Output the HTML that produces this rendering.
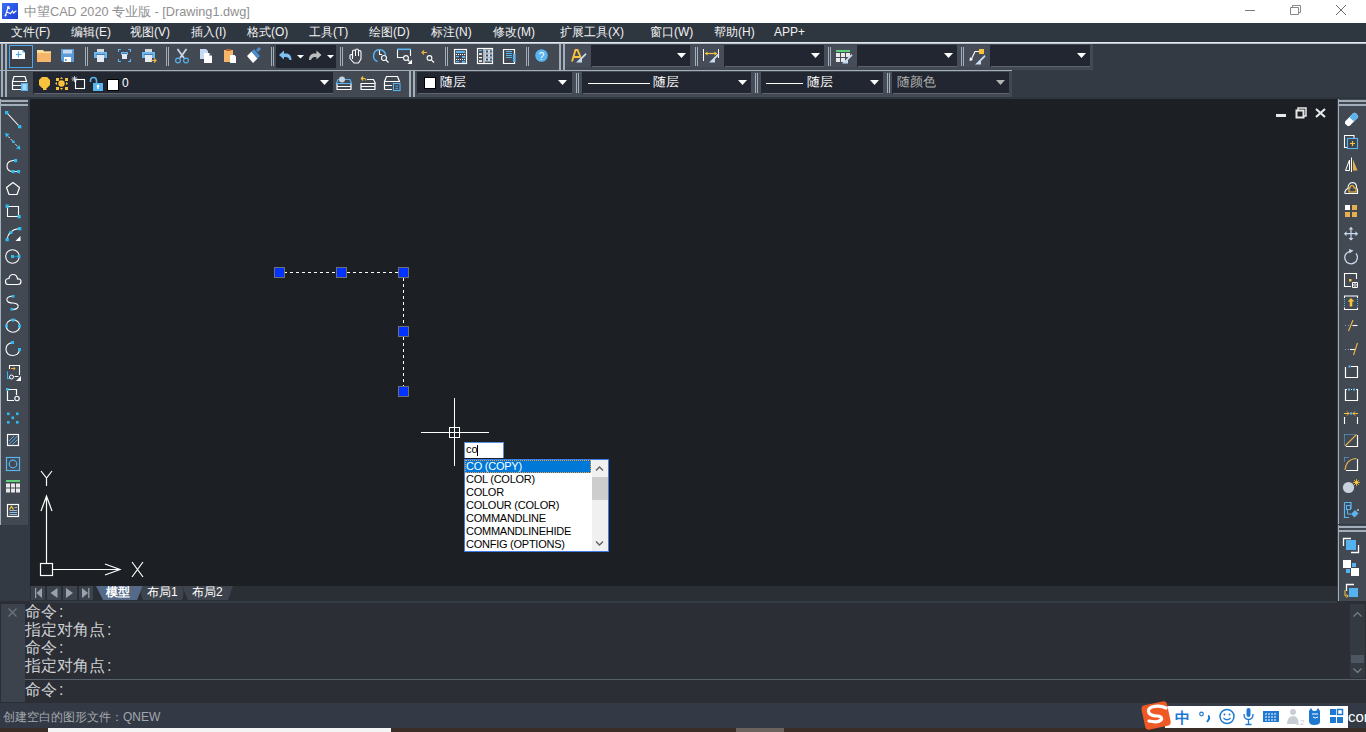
<!DOCTYPE html>
<html><head><meta charset="utf-8">
<style>
*{margin:0;padding:0;box-sizing:border-box}
html,body{width:1366px;height:732px;overflow:hidden;background:#1c1f23;font-family:"Liberation Sans",sans-serif}
.a{position:absolute}
.t{white-space:nowrap;line-height:1}
svg{overflow:visible}
</style></head><body>
<div class="a" style="left:0px;top:0px;width:1366px;height:23px;background:#ffffff;"></div>
<div class="a t" style="left:24px;top:6px;font-size:12.7px;color:#8f8f8f;">中望CAD 2020 专业版 - [Drawing1.dwg]</div>
<div class="a" style="left:0px;top:23px;width:1366px;height:19px;background:#2e3640;"></div>
<div class="a t" style="left:11px;top:26px;font-size:12px;color:#f2f2f2;">文件(F)</div>
<div class="a t" style="left:71px;top:26px;font-size:12px;color:#f2f2f2;">编辑(E)</div>
<div class="a t" style="left:130px;top:26px;font-size:12px;color:#f2f2f2;">视图(V)</div>
<div class="a t" style="left:191px;top:26px;font-size:12px;color:#f2f2f2;">插入(I)</div>
<div class="a t" style="left:247px;top:26px;font-size:12px;color:#f2f2f2;">格式(O)</div>
<div class="a t" style="left:309px;top:26px;font-size:12px;color:#f2f2f2;">工具(T)</div>
<div class="a t" style="left:369px;top:26px;font-size:12px;color:#f2f2f2;">绘图(D)</div>
<div class="a t" style="left:431px;top:26px;font-size:12px;color:#f2f2f2;">标注(N)</div>
<div class="a t" style="left:493px;top:26px;font-size:12px;color:#f2f2f2;">修改(M)</div>
<div class="a t" style="left:560px;top:26px;font-size:12px;color:#f2f2f2;">扩展工具(X)</div>
<div class="a t" style="left:650px;top:26px;font-size:12px;color:#f2f2f2;">窗口(W)</div>
<div class="a t" style="left:714px;top:26px;font-size:12px;color:#f2f2f2;">帮助(H)</div>
<div class="a t" style="left:774px;top:26px;font-size:12px;color:#f2f2f2;">APP+</div>
<div class="a" style="left:0px;top:42px;width:1366px;height:1px;background:#e4e7ea;"></div>
<div class="a" style="left:0px;top:43px;width:1366px;height:1px;background:#b9c2cc;"></div>
<div class="a" style="left:0px;top:44px;width:1366px;height:55px;background:#333a43;"></div>
<div class="a" style="left:0px;top:44px;width:1093px;height:26px;background:#424953;"></div>
<div class="a" style="left:0px;top:70px;width:1012px;height:1px;background:#a3aebb;"></div>
<div class="a" style="left:0px;top:71px;width:1012px;height:26px;background:#424953;"></div>
<div class="a" style="left:0px;top:97px;width:1366px;height:2px;background:#30363e;"></div>
<div class="a" style="left:1px;top:44px;width:2px;height:26px;background:#a3aebb;"></div>
<div class="a" style="left:5px;top:44px;width:2px;height:26px;background:#a3aebb;"></div>
<div class="a" style="left:1px;top:71px;width:2px;height:26px;background:#a3aebb;"></div>
<div class="a" style="left:5px;top:71px;width:2px;height:26px;background:#a3aebb;"></div>
<div class="a" style="left:85px;top:47px;width:1px;height:19px;background:#a3aebb;"></div>
<div class="a" style="left:87px;top:47px;width:1px;height:19px;background:#a3aebb;"></div>
<div class="a" style="left:166px;top:47px;width:1px;height:19px;background:#a3aebb;"></div>
<div class="a" style="left:168px;top:47px;width:1px;height:19px;background:#a3aebb;"></div>
<div class="a" style="left:271px;top:47px;width:1px;height:19px;background:#a3aebb;"></div>
<div class="a" style="left:273px;top:47px;width:1px;height:19px;background:#a3aebb;"></div>
<div class="a" style="left:340px;top:47px;width:1px;height:19px;background:#a3aebb;"></div>
<div class="a" style="left:342px;top:47px;width:1px;height:19px;background:#a3aebb;"></div>
<div class="a" style="left:445px;top:47px;width:1px;height:19px;background:#a3aebb;"></div>
<div class="a" style="left:447px;top:47px;width:1px;height:19px;background:#a3aebb;"></div>
<div class="a" style="left:526px;top:47px;width:1px;height:19px;background:#a3aebb;"></div>
<div class="a" style="left:528px;top:47px;width:1px;height:19px;background:#a3aebb;"></div>
<div class="a" style="left:559px;top:44px;width:2px;height:26px;background:#a3aebb;"></div>
<div class="a" style="left:563px;top:44px;width:2px;height:26px;background:#a3aebb;"></div>
<div class="a" style="left:276px;top:45px;width:60px;height:23px;background:#212631;"></div>
<div class="a" style="left:565px;top:45px;width:26px;height:22px;background:#464d58;"></div>
<div class="a" style="left:591px;top:45px;width:99px;height:22px;background:#212631;"></div>
<div class="a" style="left:592px;top:66px;width:98px;height:1px;background:#5d646e;"></div>
<svg class="a" style="left:677px;top:53px" width="9" height="5"><path d="M0 0H9L4.5 5Z" fill="#ffffff"/></svg>
<div class="a" style="left:695px;top:47px;width:1px;height:19px;background:#a3aebb;"></div>
<div class="a" style="left:697px;top:47px;width:1px;height:19px;background:#a3aebb;"></div>
<div class="a" style="left:691px;top:45px;width:33px;height:22px;background:#464d58;"></div>
<div class="a" style="left:695px;top:47px;width:1px;height:19px;background:#a3aebb;"></div>
<div class="a" style="left:697px;top:47px;width:1px;height:19px;background:#a3aebb;"></div>
<div class="a" style="left:724px;top:45px;width:100px;height:22px;background:#212631;"></div>
<div class="a" style="left:725px;top:66px;width:99px;height:1px;background:#5d646e;"></div>
<svg class="a" style="left:811px;top:53px" width="9" height="5"><path d="M0 0H9L4.5 5Z" fill="#ffffff"/></svg>
<div class="a" style="left:824px;top:45px;width:33px;height:22px;background:#464d58;"></div>
<div class="a" style="left:828px;top:47px;width:1px;height:19px;background:#a3aebb;"></div>
<div class="a" style="left:830px;top:47px;width:1px;height:19px;background:#a3aebb;"></div>
<div class="a" style="left:857px;top:45px;width:100px;height:22px;background:#212631;"></div>
<div class="a" style="left:858px;top:66px;width:99px;height:1px;background:#5d646e;"></div>
<svg class="a" style="left:944px;top:53px" width="9" height="5"><path d="M0 0H9L4.5 5Z" fill="#ffffff"/></svg>
<div class="a" style="left:957px;top:45px;width:33px;height:22px;background:#464d58;"></div>
<div class="a" style="left:961px;top:47px;width:1px;height:19px;background:#a3aebb;"></div>
<div class="a" style="left:963px;top:47px;width:1px;height:19px;background:#a3aebb;"></div>
<div class="a" style="left:990px;top:45px;width:100px;height:22px;background:#212631;"></div>
<div class="a" style="left:991px;top:66px;width:99px;height:1px;background:#5d646e;"></div>
<svg class="a" style="left:1077px;top:53px" width="9" height="5"><path d="M0 0H9L4.5 5Z" fill="#ffffff"/></svg>
<div class="a" style="left:33px;top:72px;width:300px;height:22px;background:#212631;"></div>
<div class="a" style="left:34px;top:93px;width:299px;height:1px;background:#5d646e;"></div>
<svg class="a" style="left:320px;top:80px" width="9" height="5"><path d="M0 0H9L4.5 5Z" fill="#ffffff"/></svg>
<div class="a" style="left:409px;top:71px;width:2px;height:26px;background:#a3aebb;"></div>
<div class="a" style="left:413px;top:71px;width:2px;height:26px;background:#a3aebb;"></div>
<div class="a" style="left:417px;top:72px;width:155px;height:22px;background:#212631;"></div>
<div class="a" style="left:418px;top:93px;width:154px;height:1px;background:#5d646e;"></div>
<svg class="a" style="left:558px;top:80px" width="9" height="5"><path d="M0 0H9L4.5 5Z" fill="#ffffff"/></svg>
<div class="a" style="left:572px;top:72px;width:10px;height:22px;background:#464d58;"></div>
<div class="a" style="left:576px;top:73px;width:1px;height:20px;background:#a3aebb;"></div>
<div class="a" style="left:578px;top:73px;width:1px;height:20px;background:#a3aebb;"></div>
<div class="a" style="left:582px;top:72px;width:169px;height:22px;background:#212631;"></div>
<div class="a" style="left:583px;top:93px;width:168px;height:1px;background:#5d646e;"></div>
<svg class="a" style="left:738px;top:80px" width="9" height="5"><path d="M0 0H9L4.5 5Z" fill="#ffffff"/></svg>
<div class="a" style="left:751px;top:72px;width:10px;height:22px;background:#464d58;"></div>
<div class="a" style="left:755px;top:73px;width:1px;height:20px;background:#a3aebb;"></div>
<div class="a" style="left:757px;top:73px;width:1px;height:20px;background:#a3aebb;"></div>
<div class="a" style="left:761px;top:72px;width:122px;height:22px;background:#212631;"></div>
<div class="a" style="left:762px;top:93px;width:121px;height:1px;background:#5d646e;"></div>
<svg class="a" style="left:870px;top:80px" width="9" height="5"><path d="M0 0H9L4.5 5Z" fill="#ffffff"/></svg>
<div class="a" style="left:883px;top:72px;width:9px;height:22px;background:#464d58;"></div>
<div class="a" style="left:887px;top:73px;width:1px;height:20px;background:#a3aebb;"></div>
<div class="a" style="left:889px;top:73px;width:1px;height:20px;background:#a3aebb;"></div>
<div class="a" style="left:892px;top:72px;width:117px;height:22px;background:#212631;"></div>
<div class="a" style="left:893px;top:93px;width:116px;height:1px;background:#5d646e;"></div>
<svg class="a" style="left:996px;top:80px" width="9" height="5"><path d="M0 0H9L4.5 5Z" fill="#b4b4b4"/></svg>
<div class="a t" style="left:122px;top:77px;font-size:12px;color:#ffffff;">0</div>
<div class="a t" style="left:440px;top:75px;font-size:13px;color:#ffffff;">随层</div>
<div class="a" style="left:588px;top:83px;width:62px;height:1px;background:#ffffff;"></div>
<div class="a t" style="left:653px;top:75px;font-size:13px;color:#ffffff;">随层</div>
<div class="a" style="left:766px;top:83px;width:37px;height:1px;background:#ffffff;"></div>
<div class="a t" style="left:807px;top:75px;font-size:13px;color:#ffffff;">随层</div>
<div class="a t" style="left:897px;top:75px;font-size:13px;color:#b0b0b0;">随颜色</div>
<div class="a" style="left:0px;top:99px;width:30px;height:502px;background:#333a43;"></div>
<div class="a" style="left:0px;top:99px;width:28px;height:426px;background:#424953;"></div>
<div class="a" style="left:0px;top:99px;width:1px;height:426px;background:#a3aebb;"></div>
<div class="a" style="left:1px;top:100px;width:27px;height:2px;background:#a3aebb;"></div>
<div class="a" style="left:1px;top:104px;width:27px;height:2px;background:#a3aebb;"></div>
<div class="a" style="left:1337px;top:99px;width:29px;height:502px;background:#333a43;"></div>
<div class="a" style="left:1338px;top:99px;width:28px;height:425px;background:#424953;"></div>
<div class="a" style="left:1338px;top:99px;width:1px;height:425px;background:#a3aebb;"></div>
<div class="a" style="left:1339px;top:100px;width:27px;height:2px;background:#a3aebb;"></div>
<div class="a" style="left:1339px;top:104px;width:27px;height:2px;background:#a3aebb;"></div>
<div class="a" style="left:1338px;top:525px;width:28px;height:76px;background:#424953;"></div>
<div class="a" style="left:1338px;top:525px;width:1px;height:76px;background:#a3aebb;"></div>
<div class="a" style="left:1339px;top:526px;width:27px;height:2px;background:#a3aebb;"></div>
<div class="a" style="left:1339px;top:530px;width:27px;height:2px;background:#a3aebb;"></div>
<div class="a" style="left:30px;top:99px;width:1306px;height:487px;background:#1c1f23;"></div>
<div class="a" style="left:30px;top:586px;width:1307px;height:16px;background:#2a2e35;"></div>
<div class="a" style="left:31px;top:586px;width:14px;height:14px;background:#3d434c;"></div>
<div class="a" style="left:47px;top:586px;width:14px;height:14px;background:#3d434c;"></div>
<div class="a" style="left:63px;top:586px;width:14px;height:14px;background:#3d434c;"></div>
<div class="a" style="left:79px;top:586px;width:14px;height:14px;background:#3d434c;"></div>
<div class="a" style="left:0px;top:601px;width:1366px;height:102px;background:#2b2e34;"></div>
<div class="a" style="left:30px;top:601px;width:1307px;height:2px;background:#343b45;"></div>
<div class="a" style="left:1px;top:604px;width:24px;height:98px;background:#3d434d;"></div>
<div class="a" style="left:25px;top:679px;width:1341px;height:1px;background:#56606a;"></div>
<div class="a" style="left:1350px;top:604px;width:15px;height:74px;background:#343a42;"></div>
<div class="a" style="left:1351px;top:655px;width:13px;height:8px;background:#4d5560;"></div>
<div class="a t" style="left:25px;top:603px;font-size:16px;color:#cdd1d5;line-height:18px">命令<span style="margin-left:2px">:</span></div>
<div class="a t" style="left:25px;top:621px;font-size:16px;color:#cdd1d5;line-height:18px">指定对角点<span style="margin-left:2px">:</span></div>
<div class="a t" style="left:25px;top:639px;font-size:16px;color:#cdd1d5;line-height:18px">命令<span style="margin-left:2px">:</span></div>
<div class="a t" style="left:25px;top:657px;font-size:16px;color:#cdd1d5;line-height:18px">指定对角点<span style="margin-left:2px">:</span></div>
<div class="a t" style="left:25px;top:681px;font-size:16px;color:#cdd1d5;line-height:18px">命令<span style="margin-left:2px">:</span></div>
<div class="a" style="left:0px;top:703px;width:1366px;height:25px;background:#333a45;"></div>
<div class="a t" style="left:3px;top:711px;font-size:12px;color:#a3a7ad;">创建空白的图形文件：QNEW</div>
<div class="a" style="left:0px;top:728px;width:1366px;height:4px;background:#3a2c27;"></div>
<div class="a" style="left:48px;top:728px;width:343px;height:4px;background:#f4f4f4;"></div>
<div class="a" style="left:736px;top:728px;width:48px;height:4px;background:#6b625e;"></div>
<div class="a" style="left:1165px;top:706px;width:183px;height:22px;background:#ffffff;"></div>
<div class="a t" style="left:1348px;top:709px;font-size:15px;color:#ffffff;">com</div>
<svg class="a" style="left:0;top:0" width="1366" height="732"><rect x="9.5" y="45.5" width="23" height="22" fill="#3b4049" stroke="#4aa8f0"/><path d="M12 50H22.5L25 52.5V59H12Z" fill="#ffffff"/><path d="M22.5 50V52.5H25Z" fill="#5ab4f0"/><path d="M16 54.5H21.5M18.5 51.5V57.5" stroke="#4aa8f0" stroke-width="1.2"/><path d="M37 50H43L44 51.5H51V62H37Z" fill="#f5b56b"/><path d="M37 50H43L44 51.5H51V53H37Z" fill="#fbe09a"/><path d="M61 49H74V62H63L61 60Z" fill="#5b9bd8"/><rect x="63" y="50" width="9" height="3.5" fill="#c8daf0"/><rect x="64" y="57" width="7" height="5" fill="#fff"/><rect x="65" y="59" width="1.6" height="2" fill="#5b9bd8"/><rect x="97" y="49" width="7" height="3" fill="#d5dbe3"/><rect x="94" y="52" width="13" height="6" fill="#6db6ee"/><rect x="96" y="54" width="9" height="1" fill="#3f79b0"/><rect x="97" y="55" width="7" height="7" fill="#e4e9f2"/><path d="M118.5 52V49.5H121M128 49.5H130.5V52M118.5 59V61.5H121M128 61.5H130.5V59" stroke="#5ab4f0" stroke-width="1.1" fill="none"/><rect x="121" y="52" width="7" height="3" fill="#6db6ee"/><rect x="122" y="53" width="5" height="1" fill="#3f79b0"/><rect x="122" y="54" width="5" height="5" fill="#e4e9f2"/><rect x="145" y="49" width="7" height="3" fill="#d5dbe3"/><rect x="142" y="52" width="13" height="6" fill="#6db6ee"/><rect x="144" y="54" width="9" height="1" fill="#3f79b0"/><rect x="145" y="55" width="7" height="7" fill="#e4e9f2"/><path d="M151 60.5H156M154 58.5L156 60.5L154 62.5" stroke="#f5b342" stroke-width="1.2" fill="none"/><path d="M177.5 49L184 58M186.5 49L180 58" stroke="#c8d8ea" stroke-width="1.8"/><circle cx="178" cy="60.5" r="2.4" stroke="#5ab4f0" stroke-width="1.1" fill="none"/><circle cx="186" cy="60.5" r="2.4" stroke="#5ab4f0" stroke-width="1.1" fill="none"/><path d="M200 49H206L208 51V59H200Z" fill="#c5daf2"/><path d="M204 53H209.5L212 55.5V63H204Z" fill="#fff"/><path d="M209.5 53V55.5H212Z" fill="#3c434d"/><rect x="224" y="50" width="9" height="12" fill="#f5b56b"/><rect x="226" y="49" width="5" height="2" fill="#b5642e"/><path d="M230 55H234.5L236 56.5V63H230Z" fill="#fff"/><path d="M247 56L253 63L257.5 58.5L251.5 51.5Z" fill="#fff"/><path d="M251.5 51.5L257.5 58.5L260 56L254 49Z" fill="#4a8fd0"/><path d="M256 50L259 47L261 49L258 52Z" fill="#4a8fd0"/><path d="M279 55L284 50.5V53.5H286C289.5 53.5 291.5 56 291.5 60H289.5C289 58 287.5 57 286 57H284V59.5Z" fill="#7ebff2"/><path d="M297 55H304L300.5 58.5Z" fill="#fff"/><path d="M321.5 55L316.5 50.5V53.5H314.5C311 53.5 309 56 309 60H311C311.5 58 313 57 314.5 57H316.5V59.5Z" fill="#bdbdbd"/><path d="M327 55H334L330.5 58.5Z" fill="#fff"/><path d="M352.5 59V53.5M352.5 53.5V51.5Q352.5 50 354 50Q355.5 50 355.5 51.5V50.5Q355.5 49 357 49Q358.5 49 358.5 50.5V51.5Q358.5 50.5 359.8 50.5Q361 50.5 361 52V59L358.5 63H354L350 58.5V55.5Q350 54.5 351.2 54.5Q352.5 54.5 352.5 55.5" stroke="#fff" stroke-width="1.1" fill="none" stroke-linejoin="round"/><path d="M355.5 51.5V56M358.5 51V56" stroke="#fff" stroke-width="1"/><path d="M377.5 61.5A6 6 0 1 1 385.5 55" stroke="#5ab4f0" stroke-width="1.5" fill="none"/><path d="M379.5 50.5V54.5H382" stroke="#fff" stroke-width="1.1" fill="none"/><circle cx="384" cy="58" r="2.5" stroke="#fff" stroke-width="1.1" fill="none"/><path d="M385.8 59.8L388.5 62.5" stroke="#fff" stroke-width="1.2"/><path d="M403 57.5H397.5V49.5H410.5V56" stroke="#fff" stroke-width="1.1" fill="none"/><rect x="397" y="48.5" width="14" height="1.6" fill="#5ab4f0"/><circle cx="406" cy="58" r="2.4" stroke="#fff" stroke-width="1.1" fill="none"/><path d="M407.7 59.7L409.5 61.5" stroke="#fff" stroke-width="1.1"/><path d="M407.5 64H412V59.5Z" fill="#fff"/><path d="M427 52.5H422M424 50.5L422 52.5L424 54.5" stroke="#f5b342" stroke-width="1.1" fill="none"/><circle cx="429.5" cy="58" r="2.4" stroke="#fff" stroke-width="1.1" fill="none"/><path d="M431.3 59.8L434 62.5" stroke="#fff" stroke-width="1.2"/><rect x="454.5" y="49.5" width="12" height="14" stroke="#fff" stroke-width="1.2" fill="none"/><rect x="456" y="51" width="9" height="2" fill="#5ab4f0"/><rect x="456.0" y="54.0" width="1" height="1" fill="#fff"/><rect x="458.0" y="54.0" width="1" height="1" fill="#fff"/><rect x="460.0" y="54.0" width="1" height="1" fill="#fff"/><rect x="462.0" y="54.0" width="1" height="1" fill="#fff"/><rect x="464.0" y="54.0" width="1" height="1" fill="#fff"/><rect x="456.0" y="59.0" width="1" height="1" fill="#fff"/><rect x="458.0" y="59.0" width="1" height="1" fill="#fff"/><rect x="460.0" y="59.0" width="1" height="1" fill="#fff"/><rect x="462.0" y="59.0" width="1" height="1" fill="#fff"/><rect x="464.0" y="59.0" width="1" height="1" fill="#fff"/><rect x="456" y="56" width="3" height="1.2" fill="#5ab4f0"/><rect x="462" y="56" width="3" height="2" fill="#5ab4f0"/><rect x="456" y="61" width="3" height="1.2" fill="#5ab4f0"/><rect x="462" y="61" width="3" height="2" fill="#5ab4f0"/><rect x="477.5" y="48.5" width="15" height="15" stroke="#fff" stroke-width="1.2" fill="none"/><path d="M484 48.5V63.5" stroke="#fff" stroke-width="1.2"/><rect x="479" y="50" width="3" height="1.2" fill="#5ab4f0"/><rect x="479" y="53" width="3" height="2" fill="#fff" opacity=".8"/><rect x="479" y="57" width="3" height="1.2" fill="#fff"/><rect x="479" y="60" width="3" height="2" fill="#fff" opacity=".8"/><rect x="485.5" y="50.0" width="3" height="3" stroke="#c8d8ea" stroke-width="1" fill="none"/><rect x="489.5" y="50.0" width="3" height="3" stroke="#c8d8ea" stroke-width="1" fill="none"/><rect x="485.5" y="54.0" width="3" height="3" stroke="#c8d8ea" stroke-width="1" fill="none"/><rect x="489.5" y="54.0" width="3" height="3" stroke="#c8d8ea" stroke-width="1" fill="none"/><rect x="485.5" y="58.0" width="3" height="3" stroke="#c8d8ea" stroke-width="1" fill="none"/><rect x="489.5" y="58.0" width="3" height="3" stroke="#c8d8ea" stroke-width="1" fill="none"/><path d="M503.5 49.5H514.5V63.5H503.5Z" stroke="#fff" stroke-width="1.2" fill="none"/><path d="M506 51.5H512M506 53.5H512M506 55.5H512M506 57.5H512" stroke="#5ab4f0" stroke-width="1"/><rect x="513" y="54" width="2.5" height="8" fill="#5ab4f0"/><circle cx="541.5" cy="55.5" r="6.3" fill="#5ab4f0"/><text x="541.5" y="59.5" font-size="10" font-family="Liberation Sans" fill="#fff" text-anchor="middle">?</text><path d="M572 61.5L575.5 50H577.5L580.5 57M573.5 57H581" stroke="#f9c23c" stroke-width="1.9" fill="none"/><path d="M576 62.5L585.5 53L586.5 54.5L582 59V62.5Z" fill="#c9dbef"/><path d="M703.5 49V61M718.5 49V58" stroke="#fff" stroke-width="1"/><path d="M705 53.5H717" stroke="#f9c23c" stroke-width="1.2"/><path d="M705 53.5L707.5 51.5V55.5Z M717 53.5L714.5 51.5V55.5Z" fill="#f9c23c"/><path d="M709 62.5L718.5 53L719.5 54.5L715 59V62.5Z" fill="#c9dbef"/><rect x="836" y="50" width="14" height="2" fill="#5fd07a"/><rect x="836" y="53" width="4" height="4" fill="#e8e8e8"/><rect x="841" y="53" width="4" height="4" fill="#e8e8e8"/><rect x="846" y="53" width="4" height="4" fill="#e8e8e8"/><rect x="836" y="58" width="4" height="4" fill="#e8e8e8"/><rect x="841" y="58" width="4" height="4" fill="#e8e8e8"/><path d="M842 63.5L851.5 54L852.5 55.5L848 60V63.5Z" fill="#c9dbef"/><rect x="979" y="49" width="5" height="5" fill="#f9c23c"/><path d="M979 51.5H975L971 60" stroke="#fff" stroke-width="1.1" fill="none"/><path d="M969.5 61L970 57L973 60Z" fill="#fff"/><path d="M975 64.5L984.5 55L985.5 56.5L981 61V64.5Z" fill="#c9dbef"/><path d="M12.5 81.5L14 76.5H25L26.5 81.5H12.5M12.5 81.5V85.5H21M12.5 85.5V89.5H21" stroke="#fff" stroke-width="1.2" fill="none"/><rect x="21" y="83" width="7" height="8" fill="#5ab4f0"/><path d="M22.5 85H26.5M22.5 87H26.5M22.5 89H26.5" stroke="#fff" stroke-width=".9"/><path d="M42 77H47L50 80V85L47 88H42L39 85V80Z" fill="#f9c23c"/><rect x="43" y="88" width="3.5" height="2" fill="#f9c23c"/><circle cx="61.5" cy="83.5" r="3.2" fill="#f9c23c"/><rect x="56" y="78" width="3" height="3" fill="#f9c23c"/><rect x="65" y="78" width="3" height="3" fill="#f9c23c"/><rect x="56" y="87" width="3" height="3" fill="#f9c23c"/><rect x="65" y="87" width="3" height="3" fill="#f9c23c"/><path d="M61.5 77L60 79H63Z M61.5 90L60 88H63Z M55 83.5L57 82V85Z M68 83.5L66 82V85Z" fill="#f9c23c"/><rect x="75.5" y="79.5" width="9" height="9" stroke="#fff" stroke-width="1.1" fill="none"/><path d="M74.5 76V82M71.5 79H77.5M72.3 76.8L76.7 81.2M76.7 76.8L72.3 81.2" stroke="#d8d8d8" stroke-width=".9"/><path d="M90.5 82V80.5Q90.5 77.5 93.5 77.5Q96.5 77.5 96.5 80.5V83" stroke="#5ab4f0" stroke-width="1.6" fill="none"/><rect x="93" y="83" width="10" height="8" fill="#5ab4f0"/><circle cx="98" cy="86" r="1.3" fill="#fff"/><rect x="97.3" y="86" width="1.4" height="3" fill="#fff"/><rect x="107.5" y="79.5" width="11" height="11" fill="#fff" stroke="#000" stroke-width="1"/><path d="M336.5 86.5H351.5M336.5 89.5H351.5M337 83.5V89.5M351 83.5V89.5" stroke="#fff" stroke-width="1.2" fill="none"/><path d="M336.5 83.5L338 79.5H350L351.5 83.5Z" stroke="#5ab4f0" stroke-width="1.2" fill="none"/><circle cx="342" cy="79.5" r="3" fill="#c8d2de"/><path d="M367 79.5H373.5L375.5 83.5M360.5 83.5H375.5M360.5 86.5H375.5M360.5 89.5H375.5M361 83.5V89.5M375 83.5V89.5" stroke="#fff" stroke-width="1.2" fill="none"/><path d="M361.5 78.5H364.5Q366 78.5 366 80.5M363.2 76.5L361.3 78.5L363.2 80.5" stroke="#f9c23c" stroke-width="1.1" fill="none"/><path d="M384.5 81.5L386.5 76.5H397.5L399.5 81.5H384.5M384.5 81.5V89.5M384.5 85.5H392M384.5 89.5H392" stroke="#fff" stroke-width="1.2" fill="none"/><rect x="393.5" y="83.5" width="6.5" height="7" stroke="#5ab4f0" stroke-width="1.1" fill="#3c4450"/><path d="M395.5 86H398M395.5 88.3H398" stroke="#5ab4f0" stroke-width="1"/><rect x="424.5" y="77.5" width="11" height="11" fill="#fff" stroke="#000" stroke-width="1"/><path d="M6.5 112.5L19.5 126.5" stroke="#fff" stroke-width="1.1"/><rect x="5" y="111" width="3.3" height="3.3" fill="#2fbaf2"/><rect x="18" y="125" width="3.3" height="3.3" fill="#2fbaf2"/><path d="M6 134L19.5 148.5" stroke="#fff" stroke-width="1" stroke-dasharray="2 1.5"/><path d="M5 133L9.5 134L6 137.5Z M20.5 149.5L16 148.5L19.5 145Z" fill="#2fbaf2"/><rect x="12" y="140.5" width="2.5" height="2.5" fill="#2fbaf2"/><path d="M15 160.5H13.5Q7 161 7 166Q7 171.5 13 171.5H18.5" stroke="#fff" stroke-width="1.1" fill="none"/><rect x="14" y="159" width="3.2" height="3.2" fill="#2fbaf2"/><rect x="11.5" y="170" width="3.2" height="3.2" fill="#2fbaf2"/><rect x="17" y="170" width="3.2" height="3.2" fill="#2fbaf2"/><path d="M13 182.5L19.5 187.5L17 194.5H9L6.5 187.5Z" stroke="#fff" stroke-width="1.2" fill="none" stroke-linejoin="round"/><path d="M7.5 206.5H18.5V216.5H7.5Z" stroke="#fff" stroke-width="1.1" fill="none"/><rect x="5.5" y="204.5" width="3.3" height="3.3" fill="#2fbaf2"/><rect x="17.5" y="215" width="3.3" height="3.3" fill="#2fbaf2"/><path d="M7 240Q8 230 19 228.5" stroke="#fff" stroke-width="1.1" fill="none"/><rect x="5.5" y="238" width="3.3" height="3.3" fill="#2fbaf2"/><rect x="9.5" y="231" width="3" height="3" fill="#2fbaf2"/><rect x="18" y="227" width="3.3" height="3.3" fill="#2fbaf2"/><path d="M15.5 241H20.5V236Z" fill="#fff"/><circle cx="12.5" cy="256.5" r="6.8" stroke="#fff" stroke-width="1.1" fill="none"/><path d="M12.5 256.5H18" stroke="#2fbaf2" stroke-width="1" stroke-dasharray="1 1"/><rect x="11" y="255" width="3" height="3" fill="#2fbaf2"/><rect x="17.5" y="255" width="3" height="3" fill="#2fbaf2"/><path d="M8 284.5H18Q21 284.5 21 281.5Q21 278.5 17.5 279Q17 274.5 13 274.5Q9.5 274.5 9 278.5Q5.5 278.5 5.5 281.5Q5.5 284.5 8 284.5Z" stroke="#fff" stroke-width="1.2" fill="none"/><path d="M13 296Q6 296.5 7 300.5Q8 303 13 303Q19 303.5 18 307Q17 309.5 12 309.5" stroke="#fff" stroke-width="1.1" fill="none"/><rect x="11.5" y="295" width="3" height="2.6" fill="#2fbaf2"/><rect x="10.5" y="308" width="3" height="2.6" fill="#2fbaf2"/><ellipse cx="13" cy="326" rx="6.8" ry="6.3" stroke="#fff" stroke-width="1.1" fill="none"/><rect x="11.5" y="318.5" width="3" height="3" fill="#2fbaf2"/><rect x="5" y="324.5" width="3" height="3" fill="#2fbaf2"/><rect x="18" y="324.5" width="3" height="3" fill="#2fbaf2"/><path d="M12 342.5Q6 344 6 349Q6 355 12.5 355.5Q18.5 355.5 19.5 350" stroke="#fff" stroke-width="1.1" fill="none"/><rect x="11" y="341" width="3" height="3" fill="#2fbaf2"/><rect x="18" y="348" width="3" height="3" fill="#2fbaf2"/><path d="M9.5 369V365.5H19.5V375" stroke="#fff" stroke-width="1.1" fill="none"/><path d="M7.5 371.5V378.5H10" stroke="#2fbaf2" stroke-width="1.1" fill="none"/><circle cx="11.5" cy="377" r="2" stroke="#fff" stroke-width="1" fill="none"/><path d="M14.5 376.5H18.5" stroke="#fff" stroke-width="1"/><path d="M16 381H21V376Z" fill="#fff"/><path d="M11 368.5H15M13.5 367L15.2 368.5L13.5 370" stroke="#f5b342" stroke-width="1" fill="none"/><path d="M7.5 390.5V400.5H14M7.5 389.5H16.5V395" stroke="#fff" stroke-width="1.2" fill="none"/><circle cx="17" cy="398.5" r="2.2" stroke="#fff" stroke-width="1.1" fill="none"/><rect x="6" y="388" width="2.6" height="2.6" fill="#2fbaf2"/><rect x="7" y="412.5" width="2.6" height="2.6" fill="#2fbaf2"/><rect x="16" y="412.5" width="2.6" height="2.6" fill="#2fbaf2"/><rect x="11.5" y="416.5" width="2.6" height="2.6" fill="#2fbaf2"/><rect x="7" y="421" width="2.6" height="2.6" fill="#2fbaf2"/><rect x="16" y="421" width="2.6" height="2.6" fill="#2fbaf2"/><rect x="7.5" y="434.5" width="11" height="11" stroke="#fff" stroke-width="1.2" fill="none"/><path d="M9 441L14 436M9 444.5L17.5 436M12.5 444.5L17.5 439.5" stroke="#5ab4f0" stroke-width="1"/><rect x="6.5" y="457.5" width="13" height="13" stroke="#5ab4f0" stroke-width="1.2" fill="none"/><circle cx="13" cy="464" r="3.8" stroke="#5ab4f0" stroke-width="1.2" fill="none"/><rect x="6" y="480" width="14" height="2" fill="#5fd07a"/><rect x="6" y="483.5" width="4" height="4" fill="#e8e8e8"/><rect x="11" y="483.5" width="4" height="4" fill="#e8e8e8"/><rect x="16" y="483.5" width="4" height="4" fill="#e8e8e8"/><rect x="6" y="488.5" width="4" height="4" fill="#e8e8e8"/><rect x="11" y="488.5" width="4" height="4" fill="#e8e8e8"/><rect x="16" y="488.5" width="4" height="4" fill="#e8e8e8"/><rect x="7.5" y="504.5" width="11" height="12" stroke="#fff" stroke-width="1.2" fill="none"/><path d="M9.5 509.5L11.5 506.5L13.5 509.5" stroke="#f9c23c" stroke-width="1.3" fill="none"/><path d="M14.5 507.5H17M9.5 510.5H17M9.5 512.5H17M9.5 514.5H17" stroke="#9cc9f0" stroke-width=".9"/><path d="M1345 121.5L1353 113.5Q1354.5 112 1356 113.5L1357.5 115Q1359 116.5 1357.5 118L1349.5 126H1347.5L1345 123.5Z" fill="#fff"/><path d="M1349.5 117.5L1353 113.5Q1354.5 112 1356 113.5L1357.5 115Q1359 116.5 1357.5 118L1354 121.5Z" fill="#5ab4f0"/><path d="M1347.5 147.5H1344.5V135.5H1354V138" stroke="#fff" stroke-width="1.1" fill="none"/><rect x="1347.5" y="138.5" width="10" height="10" stroke="#5ab4f0" stroke-width="1.1" fill="#3c4450"/><path d="M1350 143.5H1355M1352.5 141V146" stroke="#f9c23c" stroke-width="1.2"/><path d="M1349.5 160L1345.5 170.5H1349.5Z" stroke="#fff" stroke-width="1" fill="none"/><path d="M1351.5 157.5V172" stroke="#fff" stroke-width="1"/><path d="M1353 159.5L1357.5 170.5H1353Z" fill="#e8b04a"/><path d="M1347.5 193.5H1345.5Q1344.5 193.5 1345 191.5Q1346 189 1348 188.5Q1348 183 1352.5 182.5Q1357 183 1356.5 188Q1358 189 1357.5 193.5Z" stroke="#fff" stroke-width="1.1" fill="none"/><path d="M1349 192H1356V188H1354Q1354 185.5 1352 185.5Q1350 185.5 1350 188H1349Z" stroke="#f9c23c" stroke-width="1.1" fill="none"/><rect x="1345" y="205" width="5" height="5" fill="#fff"/><rect x="1352" y="205" width="5" height="5" fill="#e8b04a"/><rect x="1345" y="212" width="5" height="5" fill="#e8b04a"/><rect x="1352" y="212" width="5" height="5" fill="#e8b04a"/><path d="M1351 227.5V240M1344.5 233.7H1357.5" stroke="#c8d8ea" stroke-width="1.2"/><path d="M1351 227L1348.5 229.5H1353.5Z M1351 240.5L1348.5 238H1353.5Z M1344 233.7L1346.5 231.2V236.2Z M1358 233.7L1355.5 231.2V236.2Z" fill="#c8d8ea"/><path d="M1354.5 252A6.3 6.3 0 1 1 1348 252" stroke="#c8d8ea" stroke-width="1.3" fill="none" transform="rotate(20 1351 257)"/><path d="M1349 249L1353.5 250.5L1349.5 253.5Z" fill="#c8d8ea"/><path d="M1356.5 279V273.5H1344.5V286.5H1351" stroke="#fff" stroke-width="1.1" fill="none"/><rect x="1349" y="279" width="2.5" height="2.5" fill="#f9c23c"/><path d="M1352.5 282.5H1357.5V287.5H1352.5Z" stroke="#fff" stroke-width="1" fill="none"/><circle cx="1355" cy="285" r="1.3" stroke="#fff" stroke-width=".8" fill="none"/><path d="M1344.5 298V296H1357.5V298M1344.5 307.5V309.5H1357.5V307.5" stroke="#fff" stroke-width="1.1" fill="none"/><path d="M1344.5 299V306.5M1357.5 299V306.5" stroke="#5ab4f0" stroke-width="1" stroke-dasharray="1 1"/><path d="M1351 298L1347.5 301.5H1349.7V306.5H1352.3V301.5H1354.5Z" fill="#f9c23c"/><path d="M1345 325.5H1346M1348 325.5H1349" stroke="#5ab4f0" stroke-width="1"/><path d="M1352.5 325.5H1357.5" stroke="#fff" stroke-width="1.1"/><path d="M1353 320L1348.5 331" stroke="#e8b04a" stroke-width="1.2"/><path d="M1345 349.5H1346M1348 349.5H1349" stroke="#5ab4f0" stroke-width="1"/><path d="M1350 349.5H1355" stroke="#fff" stroke-width="1.1"/><path d="M1357.5 343L1353.5 355" stroke="#e8b04a" stroke-width="1.2"/><path d="M1345.5 367V377.5H1357.5V366.5H1351" stroke="#fff" stroke-width="1.2" fill="none"/><rect x="1348.5" y="365.5" width="2" height="2" fill="#5ab4f0"/><path d="M1345.5 389V400.5H1357.5V389" stroke="#fff" stroke-width="1.2" fill="none"/><rect x="1348" y="388.5" width="2" height="2" fill="#5ab4f0"/><rect x="1353" y="388.5" width="2" height="2" fill="#5ab4f0"/><path d="M1346 389.5H1347M1351 389.5H1352M1356 389.5H1357" stroke="#fff" stroke-width="1"/><path d="M1344.5 417V424M1357.5 417V424" stroke="#fff" stroke-width="1.1"/><path d="M1344 413.5H1349M1358 413.5H1353M1347 411.5L1349 413.5L1347 415.5M1355 411.5L1353 413.5L1355 415.5" stroke="#f9c23c" stroke-width="1" fill="none"/><rect x="1350" y="412.3" width="2.2" height="2.2" fill="#5ab4f0"/><path d="M1346 446.5H1357.5V435" stroke="#fff" stroke-width="1.2" fill="none"/><path d="M1344.5 434.5H1355M1344.5 434.5V445" stroke="#5ab4f0" stroke-width="1" stroke-dasharray="1 1" fill="none"/><path d="M1345 446L1356.5 434.5" stroke="#e8b04a" stroke-width="1.1"/><path d="M1346 470.5H1357.5V459" stroke="#fff" stroke-width="1.2" fill="none"/><path d="M1344.5 457.5H1349M1344.5 457.5V462" stroke="#5ab4f0" stroke-width="1" stroke-dasharray="1 1" fill="none"/><path d="M1345 470Q1346 459 1356.5 458.5" stroke="#e8b04a" stroke-width="1.1" fill="none"/><circle cx="1348.5" cy="487.5" r="5.6" fill="#c8d2de"/><circle cx="1356.5" cy="482.5" r="1.8" fill="#f9c23c"/><path d="M1356.5 479V486M1353 482.5H1360M1354 480L1359 485M1359 480L1354 485" stroke="#f9c23c" stroke-width=".8"/><path d="M1344.5 502.5H1351V509M1344.5 502.5V517.5H1349" stroke="#5ab4f0" stroke-width="1.2" fill="none"/><rect x="1346.5" y="505.5" width="4" height="4" stroke="#5ab4f0" stroke-width="1" fill="none"/><path d="M1347.5 509.5V514H1351" stroke="#5ab4f0" stroke-width="1" fill="none"/><path d="M1351 514L1355 510L1358.5 513.5L1354.5 517.5Z" fill="#5ab4f0"/><circle cx="1358" cy="510" r=".9" fill="#c8d2de"/><path d="M1343.5 546V538.5H1351" stroke="#fff" stroke-width="1.3" fill="none"/><path d="M1358.5 545V552.5H1351" stroke="#fff" stroke-width="1.3" fill="none"/><rect x="1346" y="540" width="10" height="10" fill="#55b2f0"/><rect x="1343" y="560" width="8" height="8" fill="#fff"/><rect x="1351" y="568" width="8" height="8" fill="#fff"/><rect x="1352" y="563" width="4" height="4" fill="#55b2f0"/><rect x="1346" y="569" width="4" height="4" fill="#55b2f0"/><path d="M1346.5 591V584.5H1354" stroke="#fff" stroke-width="1.3" fill="none"/><rect x="1349" y="588" width="9" height="9" fill="#55b2f0"/><path d="M1345 590V596H1348M1346.5 594.5L1348.3 596L1346.5 597.5" stroke="#f9c23c" stroke-width="1" fill="none"/><defs><linearGradient id="lg" x1="0" y1="0" x2="1" y2="1"><stop offset="0" stop-color="#3a6ff5"/><stop offset="1" stop-color="#1f3fd8"/></linearGradient></defs><rect x="2" y="3" width="16" height="16" fill="url(#lg)"/><path d="M5.5 15.5L8 7.5M8 7.5L9.5 8.5M6.5 12L10.5 13.5L12.5 11L13.5 13L16 11" stroke="#fff" stroke-width="1.2" fill="none" stroke-linecap="round"/><circle cx="8.3" cy="7.3" r="1.2" fill="#fff"/><circle cx="5.5" cy="15.5" r="1" fill="#fff"/><rect x="35" y="588" width="1.2" height="10" fill="#9aa3ad"/><path d="M36.5 593L42 588V598Z" fill="#9aa3ad"/><path d="M50.5 593L57.5 588V598Z" fill="#9aa3ad"/><path d="M73 593L66 588V598Z" fill="#9aa3ad"/><path d="M88 593L82 588V598Z" fill="#9aa3ad"/><rect x="88.2" y="588" width="1.2" height="10" fill="#9aa3ad"/><path d="M96 586H143L137 600H103Z" fill="#546a88"/><path d="M143 586H182Q185 593 182 600H143Q139 593 143 586Z" fill="#3e444d"/><path d="M182 586H233L228 600H188Z" fill="#3e444d"/><path d="M8.5 608.5L16.5 616.5M16.5 608.5L8.5 616.5" stroke="#6b727b" stroke-width="1.4"/><path d="M1353.5 616.5L1357.5 612.5L1361.5 616.5M1353.5 668.5L1357.5 672.5L1361.5 668.5" stroke="#7b838d" stroke-width="1.1" fill="none"/><path d="M596 470.5L599.5 467L603 470.5M596 541.5L599.5 545L603 541.5" stroke="#606060" stroke-width="1.3" fill="none"/><g transform="rotate(-12 1156 715)"><rect x="1143" y="703" width="26" height="25" rx="4" fill="#ef5a24"/></g><path d="M1166 708Q1160 705 1152 707Q1147 709 1149 713Q1151 716 1158 716Q1163 717 1161 720Q1158 723 1149 721" stroke="#fff" stroke-width="3.2" fill="none" stroke-linecap="round"/><text x="1182" y="723" font-size="15" font-weight="bold" fill="#1f78d1" text-anchor="middle" font-family="Liberation Sans">中</text><circle cx="1201.5" cy="714" r="1.8" stroke="#1f78d1" stroke-width="1.2" fill="none"/><path d="M1208 716Q1209.5 716 1209 719L1207 722" stroke="#1f78d1" stroke-width="2" fill="none"/><circle cx="1227" cy="716.5" r="7" stroke="#1f78d1" stroke-width="1.5" fill="none"/><circle cx="1224.5" cy="714.5" r="1" fill="#1f78d1"/><circle cx="1229.5" cy="714.5" r="1" fill="#1f78d1"/><path d="M1223.5 718Q1227 721.5 1230.5 718" stroke="#1f78d1" stroke-width="1.2" fill="none"/><rect x="1246.5" y="708" width="4" height="9" rx="2" fill="#1f78d1"/><path d="M1244 714Q1244 719.5 1248.5 719.5Q1253 719.5 1253 714M1248.5 719.5V724M1245.5 724.5H1251.5" stroke="#1f78d1" stroke-width="1.3" fill="none"/><rect x="1263" y="711" width="16" height="11" fill="#1f78d1"/><path d="M1265 714H1277M1265 717H1277M1265 720H1277" stroke="#fff" stroke-width="1" stroke-dasharray="2 1"/><circle cx="1293" cy="712" r="3" fill="#c8cdd4"/><path d="M1287 723Q1288 716 1293 716Q1297 716 1298 720V724H1287Z" fill="#c8cdd4"/><text x="1300" y="725" font-size="8" fill="#c8cdd4" font-family="Liberation Sans" text-anchor="middle">12</text><path d="M1309 711L1311 708L1313 711H1316L1318 708L1320 711V722Q1320 725 1314 725Q1309 725 1309 721Z" fill="#1f78d1"/><path d="M1312 714H1318M1313 717Q1315 719 1318 717" stroke="#fff" stroke-width="1" fill="none"/><rect x="1330" y="709" width="6" height="6" fill="#1f78d1"/><rect x="1337.5" y="709.5" width="5" height="5" stroke="#1f78d1" stroke-width="1.5" fill="none"/><rect x="1330" y="717" width="6" height="6" fill="#1f78d1"/><rect x="1337" y="717" width="6" height="6" fill="#1f78d1"/><g stroke="#fff" stroke-width="1" fill="none" shape-rendering="crispEdges"><path d="M284 272.5H336M347 272.5H398" stroke-dasharray="3 3"/><path d="M403.5 278V326M403.5 337V386" stroke-dasharray="3 3"/><path d="M454.5 398V427M454.5 438V466M421 432.5H449M460 432.5H489"/><rect x="449.5" y="427.5" width="10" height="10"/><path d="M454.5 427V438M449 432.5H460"/></g><rect x="274.5" y="267.5" width="10" height="10" fill="#0033ff" stroke="#707070" shape-rendering="crispEdges"/><rect x="336.5" y="267.5" width="10" height="10" fill="#0033ff" stroke="#707070" shape-rendering="crispEdges"/><rect x="398.5" y="267.5" width="10" height="10" fill="#0033ff" stroke="#707070" shape-rendering="crispEdges"/><rect x="398.5" y="326.5" width="10" height="10" fill="#0033ff" stroke="#707070" shape-rendering="crispEdges"/><rect x="398.5" y="386.5" width="10" height="10" fill="#0033ff" stroke="#707070" shape-rendering="crispEdges"/><g stroke="#fff" fill="none" stroke-width="1.2"><rect x="40.5" y="563.5" width="12" height="12"/><path d="M46.5 563V496M41 511L46.5 496L52 511M52.5 569.5H120M105 564L120 569.5L105 575"/><path d="M41 471L46.5 478L52 471M46.5 478V486M132 562L143 577M143 562L132 577"/></g><rect x="1276" y="114" width="10" height="3" fill="#e8e8e8"/><path d="M1298 110V108H1306V116H1304" stroke="#e8e8e8" stroke-width="1.5" fill="none"/><rect x="1296.5" y="110.5" width="7" height="7" stroke="#e8e8e8" stroke-width="2" fill="none"/><path d="M1316 109L1325 117M1325 109L1316 117" stroke="#e8e8e8" stroke-width="2.2"/><path d="M1245 10.5H1255" stroke="#7c7c7c" stroke-width="1"/><path d="M1292.5 7.5V5.5H1300.5V12.5H1298.5M1290.5 7.5H1298.5V14.5H1290.5Z" stroke="#888" fill="none"/><path d="M1336 5L1346 15M1346 5L1336 15" stroke="#6e6e6e"/></svg>
<div class="a t" style="left:106px;top:586px;font-size:12px;color:#ffffff;font-weight:bold">模型</div>
<div class="a t" style="left:147px;top:586px;font-size:12px;color:#ffffff;">布局1</div>
<div class="a t" style="left:192px;top:586px;font-size:12px;color:#ffffff;">布局2</div>
<div class="a" style="left:464px;top:442px;width:40px;height:16px;background:#fff;border:1px solid #5a8fdc;border-bottom:none"></div>
<div class="a t" style="left:466px;top:444px;font-size:11px;color:#000">co</div>
<div class="a" style="left:477px;top:445px;width:1px;height:11px;background:#000"></div>
<div class="a" style="left:464px;top:459px;width:145px;height:93px;background:#fff;border:1px solid #3c7ae6"></div>
<div class="a" style="left:465px;top:460px;width:126px;height:13px;background:#0078d7;outline:1px dotted #e8a04a;outline-offset:-1px"></div>
<div class="a" style="left:592px;top:460px;width:16px;height:91px;background:#f0f0f0"></div>
<div class="a" style="left:592px;top:477px;width:16px;height:23px;background:#cdcdcd"></div>

<svg class="a" style="left:0;top:0" width="1366" height="732"><path d="M596 470.5L599.5 467L603 470.5M596 541.5L599.5 545L603 541.5" stroke="#606060" stroke-width="1.3" fill="none"/></svg>
<div class="a t" style="left:466px;top:460px;font-size:11px;color:#fff;line-height:13px;letter-spacing:-0.25px">CO (COPY)</div>
<div class="a t" style="left:466px;top:473px;font-size:11px;color:#000;line-height:13px;letter-spacing:-0.25px">COL (COLOR)</div>
<div class="a t" style="left:466px;top:486px;font-size:11px;color:#000;line-height:13px;letter-spacing:-0.25px">COLOR</div>
<div class="a t" style="left:466px;top:499px;font-size:11px;color:#000;line-height:13px;letter-spacing:-0.25px">COLOUR (COLOR)</div>
<div class="a t" style="left:466px;top:512px;font-size:11px;color:#000;line-height:13px;letter-spacing:-0.25px">COMMANDLINE</div>
<div class="a t" style="left:466px;top:525px;font-size:11px;color:#000;line-height:13px;letter-spacing:-0.25px">COMMANDLINEHIDE</div>
<div class="a t" style="left:466px;top:538px;font-size:11px;color:#000;line-height:13px;letter-spacing:-0.25px">CONFIG (OPTIONS)</div>
</body></html>
